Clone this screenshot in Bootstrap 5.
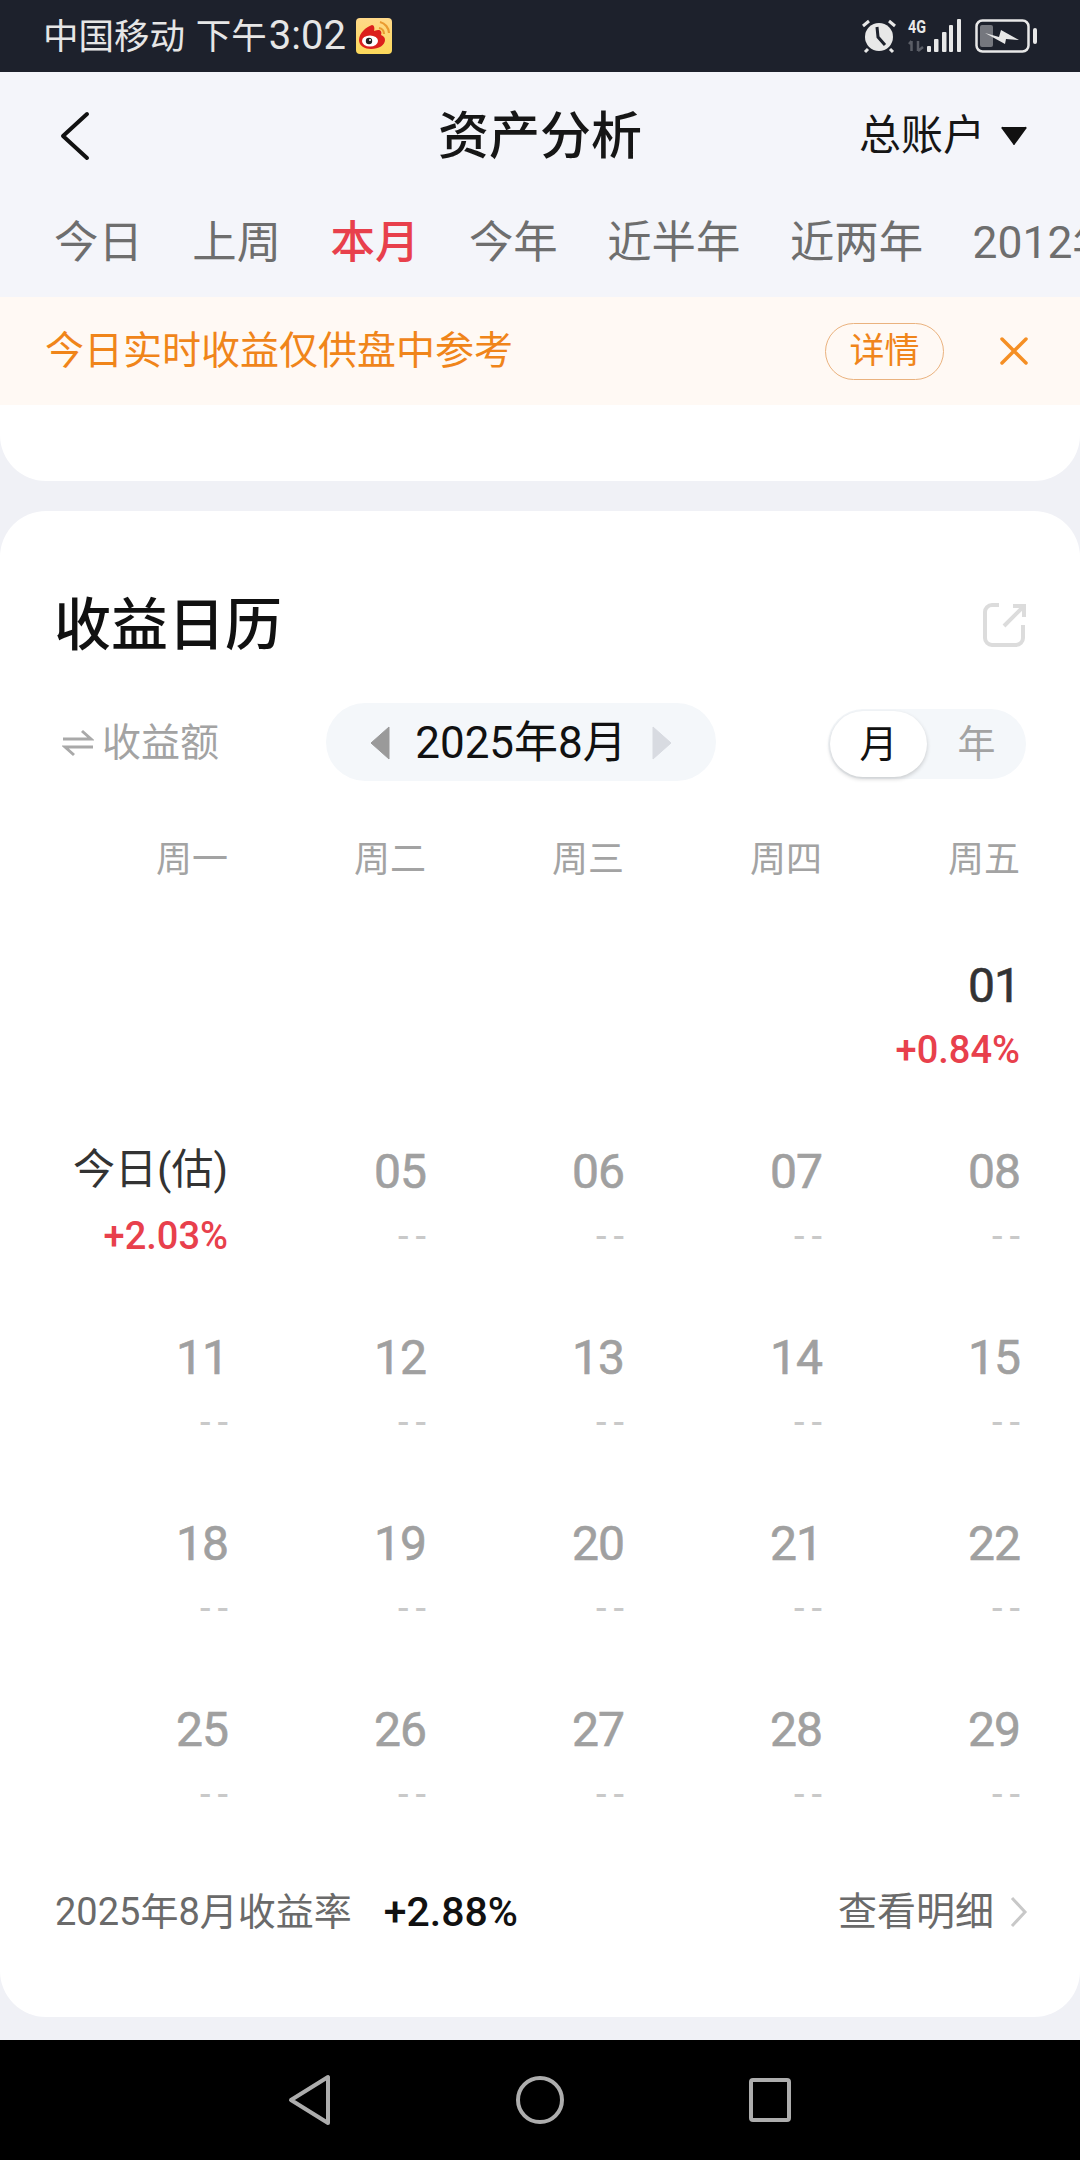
<!DOCTYPE html>
<html lang="zh-CN">
  <head>
    <meta charset="UTF-8" />
    <meta name="viewport" content="width=device-width, initial-scale=1.0" />
    <title>资产分析</title>
    <link href="https://cdn.jsdelivr.net/npm/bootstrap@5.3.0/dist/css/bootstrap.min.css" rel="stylesheet" />
    <style>
      html, body { width: 1080px; height: 2160px; overflow: hidden; }
      body {
        background-color: #f0f1f6;
        font-family: Roboto, "Noto Sans CJK SC", sans-serif;
        line-height: 1;
      }
      .app-shell { width: 1080px; height: 2160px; }
      .status-bar { height: 72px; background: #1d212c; color: #e6e6e6; font-size: 35.5px; padding: 0 43px 0 43px; word-spacing: 2px; }
      .status-time { font-size: 40px; margin-left: 2px; }
      .weibo-icon { margin-left: 10px; }
      .signal-icon { margin-left: 11px; overflow: visible; }
      .battery-icon { margin-left: 14px; }
      .top-area { background: #f4f5fa; height: 225px; overflow: hidden; }
      .title-row { height: 128px; padding: 0 53px 0 60px; position: relative; }
      .page-title { font-size: 51px; font-weight: 500; color: #161616; position: absolute; left: 0; right: 0; text-align: center; top: 39px; }
      .account-label { font-size: 42px; color: #161616; }
      .range-tabs { height: 97px; padding-top: 21px; padding-left: 54px; gap: 49.5px; font-size: 44.4px; color: #6e6e6e; white-space: nowrap; }
      .range-tabs span { flex-shrink: 0; }
      .range-on { color: #e8404c; font-weight: 500; }
      .notice-bar { height: 108px; background: #fff9f4; color: #f0851a; font-size: 39px; padding: 0 51px 0 45px; }
      .detail-pill { width: 119px; height: 57px; border: 1px solid #eab27e; border-radius: 29px; font-size: 35px; margin-right: 55px; }
      .prev-card { height: 76px; background: #fff; border-radius: 0 0 46px 46px; }
      .cal-card { height: 1506px; margin-top: 30px; background: #fff; border-radius: 46px; position: relative; }
      .cal-head { height: 192px; padding: 36px 53px 0 54px; }
      .cal-title { font-size: 57px; font-weight: 500; color: #111; }
      .cal-tools { height: 78px; padding: 0 54px 0 62px; }
      .metric-switch { width: 264px; color: #a3a3a3; font-size: 39px; gap: 8px; padding-top: 2px; }
      .month-pill { width: 390px; height: 78px; border-radius: 39px; background: #f4f7fa; font-size: 44px; color: #111; padding: 2px 44px 0; }
      .period-switch { width: 198px; height: 70px; margin-left: 112px; margin-top: 3px; border-radius: 35px; background: #f4f7fa; font-size: 38px; color: #a3a3a3; }
      .period-on { width: 97px; height: 66px; margin-left: 2px; border-radius: 33px; background: #fff; color: #111; box-shadow: 0 2px 4px rgba(0, 0, 0, .18); }
      .period-off { flex: 1; }
      .week-row { margin-top: 51px; height: 56px; padding-left: 30px; }
      .week-cell { width: 198px; text-align: right; font-size: 36px; color: #a3a3a3; }
      .day-rows { padding-left: 30px; margin-top: 64px; }
      .day-row { height: 186px; }
      .day-cell { width: 198px; text-align: right; }
      .day-num { height: 73px; font-size: 48px; color: #a0a0a0; font-weight: 400; padding-top: 10px; letter-spacing: -1px; -webkit-text-stroke: .6px currentColor; }
      .day-num.day-live { color: #333; }
      .day-num.day-today { font-size: 42px; font-weight: 400; color: #333; padding-top: 11px; letter-spacing: 0; -webkit-text-stroke: 0; }
      .day-gain { font-size: 38px; color: #c9c9c9; height: 50px; line-height: 50px; letter-spacing: 7px; margin-right: -7px; }
      .day-gain.gain-up { color: #e8404c; font-weight: 500; letter-spacing: 0; margin-right: 0; }
      .cal-foot { position: absolute; left: 0; right: 0; top: 1380px; height: 42px; padding: 0 52px 0 55px; font-size: 38px; color: #6a6a6a; }
      .foot-rate { color: #111; font-size: 41px; font-weight: 500; margin-left: 32px; }
      .foot-more { font-size: 39px; }
      .nav-bar { height: 120px; background: #000; margin-top: 23px; }
      .nav-key { width: 230px; }
    </style>
  </head>
  <body>
    <div class="app-shell d-flex flex-column">
      <!-- Status bar -->
      <div class="status-bar d-flex align-items-center justify-content-between">
        <div class="d-flex align-items-center">
          <span>中国移动 下午<span class="status-time">3:02</span></span>
          <svg class="weibo-icon" width="36" height="36" viewBox="0 0 36 36">
            <defs><linearGradient id="wb" x1="0" y1="0" x2="0" y2="1"><stop offset="0" stop-color="#ffd98a" /><stop offset="1" stop-color="#fbd85a" /></linearGradient></defs>
            <rect width="36" height="36" rx="4" fill="url(#wb)" />
            <path d="M16 7C10 9 3 15 3 22c0 6 6 9 12 9 8 0 14-4 14-9 0-3-2-4-4-5 1-3 0-5-3-5-2 0-3 1-4 1 1-3 0-6-2-6z" fill="#dc1f1c" />
            <ellipse cx="14" cy="23" rx="8" ry="5.5" fill="#fff" />
            <circle cx="13" cy="23" r="3.2" fill="#222" />
            <circle cx="14" cy="22" r="1" fill="#fff" />
            <path d="M23 10a6 6 0 0 1 5 6M24 4a12 12 0 0 1 9 11" fill="none" stroke="#ea9a30" stroke-width="2.2" />
          </svg>
        </div>
        <div class="d-flex align-items-center">
          <svg width="36" height="36" viewBox="0 0 36 36">
            <circle cx="18" cy="19" r="14" fill="#e8e8e8" />
            <path d="M16 9l1 10 7 8" fill="none" stroke="#1d212c" stroke-width="3" />
            <path d="M2 8l6-5M34 8l-6-5M7 31l-3 3M29 31l3 3" stroke="#e8e8e8" stroke-width="3" />
          </svg>
          <svg class="signal-icon" width="53" height="36" viewBox="0 0 53 36">
            <text x="0" y="15" font-size="18" font-weight="700" fill="#e8e8e8" font-family="Roboto, sans-serif" textLength="18" lengthAdjust="spacingAndGlyphs">4G</text>
            <path d="M3.5 33V23M1 26l2.5-3M10 23v10M10 33l5-4" fill="none" stroke="#5a5d66" stroke-width="2.5" />
            <rect x="19" y="28" width="4" height="6" rx="1" fill="#e8e8e8" />
            <rect x="26" y="21" width="4.5" height="13" rx="1" fill="#e8e8e8" />
            <rect x="34" y="14" width="4.5" height="20" rx="1" fill="#e8e8e8" />
            <rect x="41" y="7" width="4" height="27" rx="1" fill="#e8e8e8" />
            <rect x="49" y="1" width="4" height="33" rx="1" fill="#e8e8e8" />
          </svg>
          <svg class="battery-icon" width="62" height="36" viewBox="0 0 62 36">
            <rect x="1.5" y="2.5" width="52" height="31" rx="6" fill="none" stroke="#e8e8e8" stroke-width="2.5" />
            <rect x="5" y="7" width="13" height="22" rx="2" fill="#75777e" />
            <rect x="58" y="10" width="4" height="16" rx="2" fill="#e8e8e8" />
            <path d="M10 15l14 4 2-7 18 10-13-1-1 5z" fill="#e8e8e8" />
          </svg>
        </div>
      </div>

      <!-- Title and range tabs -->
      <div class="top-area">
        <div class="title-row d-flex align-items-center justify-content-between">
          <svg width="30" height="50" viewBox="0 0 30 50" class="flex-shrink-0">
            <path d="M27 3L3 25l24 22" fill="none" stroke="#111" stroke-width="4" stroke-linecap="round" stroke-linejoin="round" />
          </svg>
          <div class="page-title">资产分析</div>
          <div class="d-flex align-items-center account-label">
            <span>总账户</span>
            <svg class="ms-3" width="26" height="20" viewBox="0 0 26 20"><path d="M2 1h22a1 1 0 0 1 1 2L14 18a1 1 0 0 1-2 0L1 3a1 1 0 0 1 1-2z" fill="#111" /></svg>
          </div>
        </div>
        <div class="range-tabs d-flex align-items-start">
          <span>今日</span><span>上周</span><span class="range-on">本月</span><span>今年</span><span>近半年</span><span>近两年</span><span>2012年至今</span>
        </div>
      </div>

      <!-- Notice -->
      <div class="notice-bar d-flex align-items-center">
        <span class="flex-grow-1">今日实时收益仅供盘中参考</span>
        <span class="detail-pill d-flex align-items-center justify-content-center">详情</span>
        <svg width="30" height="30" viewBox="0 0 30 30"><path d="M3 3l24 24M27 3L3 27" stroke="#f58f24" stroke-width="3.5" stroke-linecap="round" /></svg>
      </div>
      <div class="prev-card"></div>

      <!-- Calendar card -->
      <div class="cal-card">
        <div class="cal-head d-flex align-items-center justify-content-between">
          <span class="cal-title">收益日历</span>
          <svg width="44" height="44" viewBox="0 0 44 44">
            <path d="M16 2H9a7 7 0 0 0-7 7v26a7 7 0 0 0 7 7h24a7 7 0 0 0 7-7V22" fill="none" stroke="#dcdcdc" stroke-width="4" />
            <path d="M21 23L41 3M30 3h11v11" fill="none" stroke="#dcdcdc" stroke-width="4" />
          </svg>
        </div>
        <div class="cal-tools d-flex align-items-center">
          <div class="metric-switch d-flex align-items-center">
            <svg width="32" height="28" viewBox="0 0 32 28"><path d="M1 10h28L20 2M31 18H3l9 8" fill="none" stroke="#a9a9a9" stroke-width="3" /></svg>
            <span>收益额</span>
          </div>
          <div class="month-pill d-flex align-items-center justify-content-between">
            <svg width="20" height="34" viewBox="0 0 20 34"><path d="M19 1v32L1 17z" fill="#9a9a9a" stroke="#9a9a9a" stroke-width="1" stroke-linejoin="round" /></svg>
            <span>2025年8月</span>
            <svg width="20" height="34" viewBox="0 0 20 34"><path d="M1 1v32l18-16z" fill="#d8dbe1" stroke="#d8dbe1" stroke-width="1" stroke-linejoin="round" /></svg>
          </div>
          <div class="period-switch d-flex align-items-center">
            <span class="period-on d-flex align-items-center justify-content-center">月</span>
            <span class="period-off text-center">年</span>
          </div>
        </div>
        <div class="week-row d-flex align-items-center" id="week-row"></div>
        <div class="day-rows" id="day-rows"></div>
        <div class="cal-foot d-flex align-items-center justify-content-between">
          <div class="d-flex align-items-center">
            <span>2025年8月收益率</span>
            <span class="foot-rate">+2.88%</span>
          </div>
          <div class="d-flex align-items-center">
            <span class="foot-more">查看明细</span>
            <svg class="ms-3" width="18" height="32" viewBox="0 0 18 32"><path d="M2 2l13 14L2 30" fill="none" stroke="#c8c8c8" stroke-width="3" /></svg>
          </div>
        </div>
      </div>

      <!-- Android nav keys -->
      <div class="nav-bar d-flex align-items-center justify-content-center">
        <div class="nav-key d-flex justify-content-center">
          <svg width="44" height="52" viewBox="0 0 44 52"><path d="M40 3v46L3 26z" fill="none" stroke="#adadad" stroke-width="4" stroke-linejoin="round" /></svg>
        </div>
        <div class="nav-key d-flex justify-content-center">
          <svg width="50" height="50" viewBox="0 0 50 50"><circle cx="25" cy="25" r="22" fill="none" stroke="#adadad" stroke-width="4" /></svg>
        </div>
        <div class="nav-key d-flex justify-content-center">
          <svg width="44" height="46" viewBox="0 0 44 46"><rect x="3" y="3" width="38" height="40" rx="2" fill="none" stroke="#adadad" stroke-width="4" /></svg>
        </div>
      </div>
    </div>

    <script>
      // Weekday header
      const weekdays = ["周一", "周二", "周三", "周四", "周五"];
      document.getElementById("week-row").innerHTML = weekdays
        .map((d) => `<div class="week-cell">${d}</div>`)
        .join("");

      // Day rows, null means an empty cell
      const rows = [
        [null, null, null, null, { n: "01", g: "+0.84%", live: true }],
        [{ n: "今日(估)", g: "+2.03%", today: true }, { n: "05" }, { n: "06" }, { n: "07" }, { n: "08" }],
        [{ n: "11" }, { n: "12" }, { n: "13" }, { n: "14" }, { n: "15" }],
        [{ n: "18" }, { n: "19" }, { n: "20" }, { n: "21" }, { n: "22" }],
        [{ n: "25" }, { n: "26" }, { n: "27" }, { n: "28" }, { n: "29" }],
      ];
      document.getElementById("day-rows").innerHTML = rows
        .map((row) => {
          const cells = row.map((c) => {
            if (!c) return `<div class="day-cell"></div>`;
            const numClass = c.today ? "day-today" : c.live ? "day-live" : "";
            const gainClass = c.g ? "gain-up" : "";
            return `<div class="day-cell">
              <div class="day-num ${numClass}">${c.n}</div>
              <div class="day-gain ${gainClass}">${c.g || "--"}</div>
            </div>`;
          });
          return `<div class="day-row d-flex">${cells.join("")}</div>`;
        })
        .join("");
    </script>
    <script src="https://cdn.jsdelivr.net/npm/bootstrap@5.3.0/dist/js/bootstrap.bundle.min.js"></script>
  </body>
</html>
